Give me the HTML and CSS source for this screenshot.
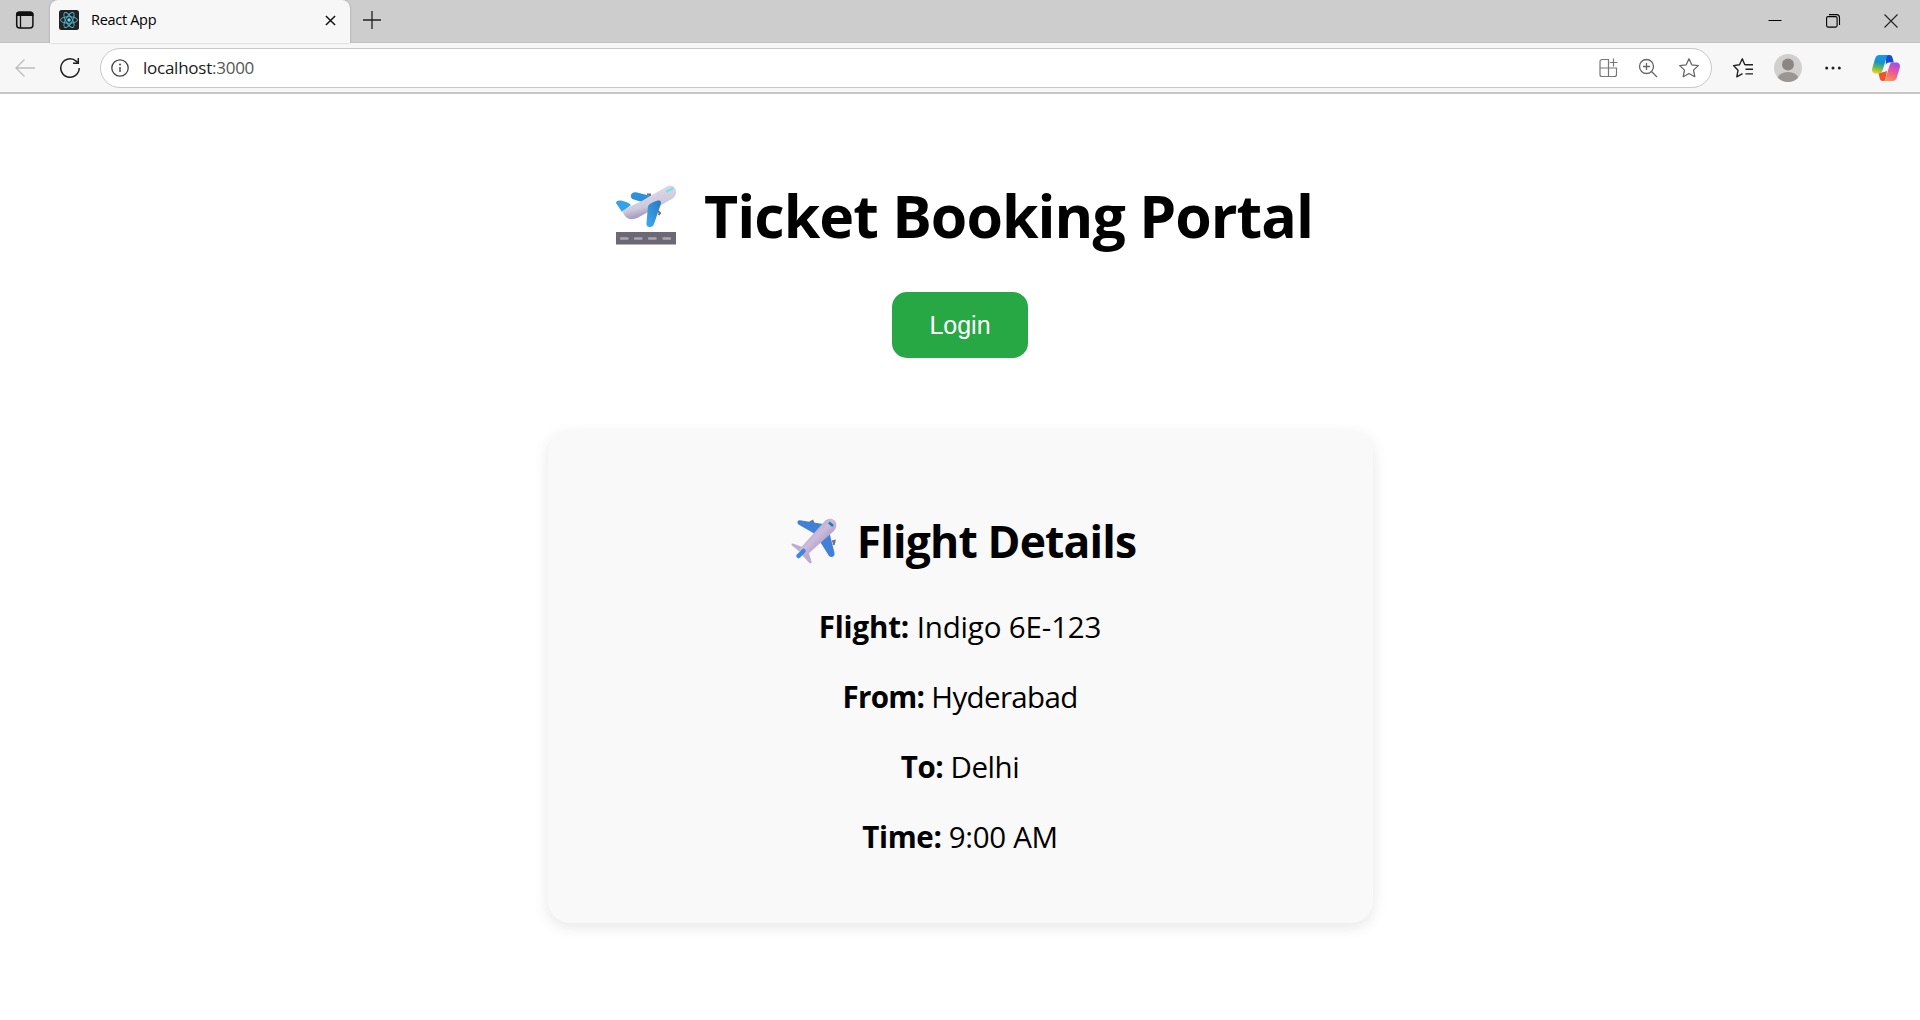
FILE: index.html
```html
<!DOCTYPE html>
<html lang="en">
<head>
<meta charset="utf-8">
<title>React App</title>
<link rel="stylesheet" href="styles.css">
</head>
<body>
<div class="tabstrip">
  <svg class="workspaces" width="20" height="20" viewBox="0 0 20 20"><rect x="1.700" y="2.200" width="16.200" height="15.800" rx="3" fill="none" stroke="#111" stroke-width="1.500"/><path d="M1 6V4.500a3 3 0 0 1 3-3h11.500a3 3 0 0 1 3 3V6z" fill="#111"/><path d="M5.500 6v12" stroke="#111" stroke-width="1.300"/></svg>
  <div class="tab">
    <svg width="20" height="20" viewBox="0 0 20 20"><rect width="20" height="20" rx="2.500" fill="#222"/><g fill="none" stroke="#53b9d1" stroke-width=".9"><ellipse cx="10" cy="10" rx="8.500" ry="3.300"/><ellipse cx="10" cy="10" rx="8.500" ry="3.300" transform="rotate(60 10 10)"/><ellipse cx="10" cy="10" rx="8.500" ry="3.300" transform="rotate(120 10 10)"/></g><circle cx="10" cy="10" r="1.700" fill="#61dafb"/></svg>
    <span class="tab-title">React App</span>
    <svg class="tab-close" width="11" height="11" viewBox="0 0 12 12"><path d="M1 1l10 10M11 1L1 11" stroke="#111" stroke-width="1.600"/></svg>
  </div>
  <svg class="new-tab" width="18" height="18" viewBox="0 0 18 18"><path d="M9 0v18M0 9h18" stroke="#222" stroke-width="1.300"/></svg>
  <div class="window-controls">
    <svg width="14" height="14" viewBox="0 0 14 14"><path d="M.5 6.500h13" stroke="#000"/></svg>
    <svg width="14" height="14" viewBox="0 0 14 14"><rect x=".6" y="2.600" width="10.500" height="10.500" rx="1.500" fill="none" stroke="#000" stroke-width="1.100"/><path d="M3 .6h7.500a3 3 0 0 1 3 3V11" fill="none" stroke="#000" stroke-width="1.100"/></svg>
    <svg width="14" height="14" viewBox="0 0 14 14"><path d="M.5 .5l13 13M13.500 .5l-13 13" stroke="#222" stroke-width="1.100"/></svg>
  </div>
</div>
<div class="toolbar">
  <svg class="back" width="20" height="18" viewBox="0 0 20 18"><path d="M20 9H1M9.500 .5L1 9l8.500 8.500" fill="none" stroke="#bdbdbd" stroke-width="1.300"/></svg>
  <svg class="reload" width="22" height="22" viewBox="0 0 22 22"><path d="M20.200 11a9.200 9.200 0 1 1-2.800-6.600l1.400 1.400M19.300 1v5.300H14" fill="none" stroke="#222" stroke-width="1.500"/></svg>
  <div class="address">
    <svg width="18" height="18" viewBox="0 0 18 18"><circle cx="9" cy="9" r="8.200" fill="none" stroke="#444" stroke-width="1.300"/><path d="M9 8v5" stroke="#444" stroke-width="1.400"/><circle cx="9" cy="5.500" r=".95" fill="#444"/></svg>
    <span class="url">localhost<span class="port">:3000</span></span>
    <div class="address-actions">
      <svg width="20" height="20" viewBox="0 0 20 20" fill="none" stroke="#777" stroke-width="1.200"><path d="M9.500 10V1.500H3a2 2 0 0 0-2 2V16.500a2 2 0 0 0 2 2H15.500a2 2 0 0 0 2-2V10H1M9.500 10v8.500M14.500 .5v8M10.800 4.500h7.700"/></svg>
      <svg width="20" height="20" viewBox="0 0 20 20" fill="none" stroke="#666" stroke-width="1.300"><circle cx="8.500" cy="8.500" r="7"/><path d="M13.500 13.500l5.500 5.500M8.500 5v7M5 8.500h7"/></svg>
      <svg width="22" height="22" viewBox="0 0 22 22"><path d="M11 1.800l2.800 6 6.500.8-4.800 4.500 1.300 6.600L11 16.500l-5.800 3.200 1.300-6.600L1.700 8.600l6.500-.8z" fill="none" stroke="#666" stroke-width="1.300" stroke-linejoin="round"/></svg>
    </div>
  </div>
  <svg class="favorites" width="22" height="22" viewBox="0 0 22 22"><path d="M13.800 7.700L12.700 7.500 10.300 1.800 7.500 7.800 1.500 8.600l4.500 4.700-1.200 6.500 5.700-3.200M13.500 7.700H21M13.500 12.300H21M13.500 16.900H21" fill="none" stroke="#222" stroke-width="1.400" stroke-linejoin="round"/></svg>
  <svg class="profile" width="28" height="28" viewBox="0 0 28 28"><defs><clipPath id="avatar"><circle cx="14" cy="14" r="14"/></clipPath></defs><g clip-path="url(#avatar)"><rect width="28" height="28" fill="#d2d0ce"/><circle cx="14" cy="10.500" r="6" fill="#8a8684"/><ellipse cx="14" cy="25" rx="10.500" ry="7" fill="#9a9694"/></g></svg>
  <svg class="more" width="16" height="4" viewBox="0 0 16 4" fill="#222"><circle cx="1.700" cy="2" r="1.500"/><circle cx="8" cy="2" r="1.500"/><circle cx="14.300" cy="2" r="1.500"/></svg>
  <svg class="copilot" width="28" height="26" viewBox="0 0 28 26">
    <defs>
      <linearGradient id="cpLeft" x1=".5" y1="0" x2=".3" y2="1"><stop offset="0" stop-color="#1698f0"/><stop offset=".4" stop-color="#1495c9"/><stop offset=".68" stop-color="#65b85a"/><stop offset="1" stop-color="#f5cf17"/></linearGradient>
      <linearGradient id="cpRight" x1=".7" y1="0" x2=".3" y2="1"><stop offset="0" stop-color="#a14bf0"/><stop offset=".5" stop-color="#ee5a91"/><stop offset="1" stop-color="#fa9552"/></linearGradient>
    </defs>
    <path d="M14 0h3.500c1.700 0 2.500 1 3 2.700l1.300 4.800H17c-2 0-2.700 1-3.200 2.700z" fill="#1b49cf"/>
    <path d="M6.500 18l5.500-1 3-1-2 10h-2.300c-1.700 0-2.500-1-3-2.700z" fill="#ee532f"/>
    <path d="M7.500 0H17c-1.700.3-2.200 1.500-2.800 3.500l-3.700 12c-.6 2-1.700 3-3.700 3H3.500C.8 18.500-.5 16.200.3 13L3 4C3.900 1.200 5 0 7.500 0z" fill="url(#cpLeft)"/>
    <path d="M20.500 26H11c1.700-.3 2.200-1.500 2.800-3.500l3.700-12c.6-2 1.700-3 3.700-3h3.300c2.700 0 4 2.300 3.200 5.500L25 22c-.9 2.800-2 4-4.500 4z" fill="url(#cpRight)"/>
  </svg>
</div>
<main class="page">
  <h1 class="portal-title">
    <svg width="60" height="60" viewBox="0 0 60 60">
      <defs>
        <linearGradient id="body1" x1=".35" y1=".3" x2=".55" y2=".8"><stop offset="0" stop-color="#d9d5e3"/><stop offset=".6" stop-color="#cfcadb"/><stop offset="1" stop-color="#aaa0c4"/></linearGradient>
        <linearGradient id="wing1" x1="1" y1="0" x2="0" y2="1"><stop offset="0" stop-color="#2878c0"/><stop offset="1" stop-color="#3dabf2"/></linearGradient>
      </defs>
      <rect y="47" width="60" height="12.500" fill="#6d6876"/>
      <path d="M5 53.500h6.500M19 53.500h6.500M33 53.500h6.500M47.500 53.500H54" stroke="#aaa6b4" stroke-width="2.400" stroke-linecap="round"/>
      <path d="M31 9.500h3v3M42 26l2 2-1.500 2" fill="none" stroke="#756b80" stroke-width="2"/>
      <path d="M35 11L20 7.300c-5-.8-7 5-3 7l10 3z" fill="#2c91d8"/>
      <path d="M0 18c0-2 2.500-2.800 5-2.400 4 .6 8 2.400 10 4.400l-9 7z" fill="#36a0e9"/>
      <path d="M6 26l10-5.500c7-2.800 13-6 19-10L51 1.500c5-3 11 2 8.500 8.500-.5 1.500-2 3-4 4.200L24 31.500C18 35 13 35.500 9 31z" fill="url(#body1)"/>
      <path d="M49.500 6l7-4 1.300 2-7 4z" fill="#78e0ef"/>
      <path d="M32 21c2-3 8-5.500 11-5.500 2 0 2.200 1.500 1.700 4L38 39c-1.300 4.500-8.500 4-7.500-1z" fill="url(#wing1)"/>
    </svg>
    <span>Ticket Booking Portal</span>
  </h1>
  <button class="login">Login</button>
  <section class="card">
    <h2 class="card-title">
      <svg width="46" height="46" viewBox="0 0 46 46">
        <defs><linearGradient id="body2" x1=".3" y1=".3" x2=".65" y2=".65"><stop offset="0" stop-color="#b6aac3"/><stop offset=".5" stop-color="#ccbddb"/><stop offset="1" stop-color="#b8a3cc"/></linearGradient></defs>
        <path d="M19 4.500l2.500-1.500 1.200 3M41 23.500l2.500-.5-1 4" fill="none" stroke="#77717f" stroke-width="2.200"/>
        <path d="M32 6L9 2.300C6.500 2 5.500 4.700 7.500 6.500L24 16zM38 13l5.500 22c.7 4-3.500 5-5.500 3L28 22z" fill="#4080d9"/>
        <path d="M14 30L2 25.500c-1.500-.5-2 1.200-1 2L9 34zM17 32l3.500 11.500c.7 1.500-1 2.500-2.200 1.500L10 36z" fill="#c0abd0"/>
        <path d="M9 30.500L33 4c4-5.500 12.500-4 12.300 3-.1 2.500-1 4.500-3 6.500L17 36c-3 2.500-10.500-1.500-8-5.500z" fill="url(#body2)"/>
        <path d="M12.500 33L7.500 38" stroke="#3b87e5" stroke-width="4.500" stroke-linecap="round"/>
        <path d="M38 4.500l4 3.500" stroke="#187db8" stroke-width="2.500"/>
      </svg>
      <span>Flight Details</span>
    </h2>
    <p class="row flight"><strong>Flight:</strong> Indigo 6E-123</p>
    <p class="row from"><strong>From:</strong> Hyderabad</p>
    <p class="row to"><strong>To:</strong> Delhi</p>
    <p class="row time"><strong>Time:</strong> 9:00 AM</p>
  </section>
</main>
</body>
</html>
```

FILE: styles.css
```css
* { box-sizing: border-box; }
body {
  margin: 0;
  height: 1020px;
  overflow: hidden;
  background: #fff;
  color: #000;
  font-family: "Open Sans", "Noto Sans", sans-serif;
}
svg { display: block; flex: none; overflow: visible; }
.tabstrip {
  display: flex;
  height: 43px;
  background: #cdcdcd;
  border-bottom: 1px solid #c2c2c2;
}
.workspaces { margin: 10px 14px 0 15px; }
.tab {
  display: flex;
  align-items: center;
  width: 300px;
  height: 43px;
  margin-left: 1px;
  padding: 0 14px 3px 9px;
  background: #f7f7f7;
  border-radius: 8px 8px 0 0;
  box-shadow: 0 0 2px rgba(0, 0, 0, .3);
}
.tab-title { margin: -1px 0 0 12px; font-size: 14.5px; letter-spacing: -.3px; }
.tab-close { margin-left: auto; }
.new-tab { margin: 11px 0 0 13px; }
.window-controls { display: flex; gap: 44px; margin: 14px 22px 0 auto; }
.toolbar {
  display: flex;
  align-items: center;
  height: 51px;
  padding-top: 1px;
  background: #f7f7f7;
  border-bottom: 2px solid #c6c6c6;
}
.back { margin-left: 15px; }
.reload { margin-left: 24px; }
.address {
  display: flex;
  align-items: center;
  width: 1612px;
  height: 40px;
  margin-left: 19px;
  padding: 0 11px 0 10px;
  background: #fff;
  border: 1px solid #c8c8c8;
  border-radius: 20px;
}
.url { margin: -1px 0 0 14px; font-size: 17px; letter-spacing: -.25px; color: #1b1b1b; }
.port { color: #555; }
.address-actions { display: flex; align-items: center; gap: 20px; margin-left: auto; }
.address-actions svg:first-child { margin-right: -1px; }
.favorites { margin-left: 20px; }
.profile { margin-left: 20px; }
.more { margin-left: 23px; }
.copilot { margin-left: 31px; }
.page {
  display: flex;
  flex-direction: column;
  align-items: center;
  padding-top: 81px;
}
.portal-title, .card-title { display: flex; align-items: center; margin: 0; white-space: nowrap; }
.portal-title {
  gap: 28px;
  height: 80px;
  padding-left: 9px;
  font-size: 59px;
  line-height: 80px;
  letter-spacing: -.97px;
}
.login {
  width: 136px;
  height: 66px;
  margin-top: 37px;
  padding: 0;
  border: 0;
  border-radius: 15px;
  background: #28a745;
  color: #fff;
  font: 25px "Liberation Sans", Arial, sans-serif;
}
.card {
  display: flex;
  flex-direction: column;
  align-items: center;
  width: 825px;
  height: 492px;
  margin-top: 73px;
  padding-top: 70px;
  background: #f9f9f9;
  border-radius: 22px;
  box-shadow: 0 4px 15px rgba(0, 0, 0, .1);
}
.card-title {
  gap: 20px;
  height: 80px;
  padding-left: 7px;
  font-size: 44.5px;
  line-height: 80px;
  letter-spacing: -.87px;
}
.card-title + .row { margin-top: 11px; }
.row { margin: 0; height: 70px; line-height: 70px; font-size: 29.5px; white-space: nowrap; }
.flight { letter-spacing: -.15px; }
.from { letter-spacing: -.65px; }
.to { letter-spacing: -.45px; }
.time { letter-spacing: -.33px; }
```
